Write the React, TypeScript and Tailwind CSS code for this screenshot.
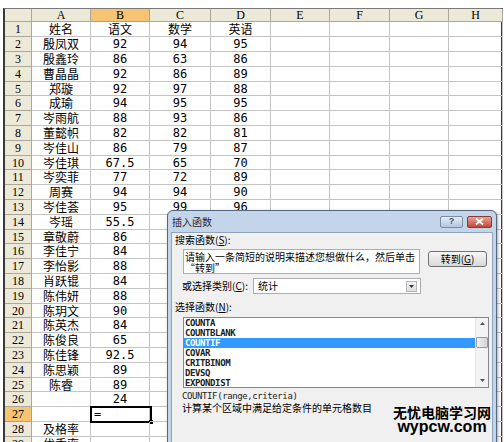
const rows: string[][] = [
  ['姓名', '语文', '数学', '英语'],
  ['殷凤双', '92', '94', '95'],
  ['殷鑫玲', '86', '63', '86'],
  ['曹晶晶', '92', '86', '89'],
  ['郑璇', '92', '97', '88'],
  ['成瑜', '94', '95', '95'],
  ['岑雨航', '88', '93', '86'],
  ['董懿帜', '82', '82', '81'],
  ['岑佳山', '86', '79', '87'],
  ['岑佳琪', '67.5', '65', '70'],
  ['岑奕菲', '77', '72', '89'],
  ['周赛', '94', '94', '90'],
  ['岑佳荟', '95', '99', '96'],
  ['岑瑶', '55.5', '', ''],
  ['章敬蔚', '86', '', ''],
  ['李佳宁', '84', '', ''],
  ['李怡影', '88', '', ''],
  ['肖跃锟', '84', '', ''],
  ['陈伟妍', '88', '', ''],
  ['陈玥文', '90', '', ''],
  ['陈英杰', '84', '', ''],
  ['陈俊良', '65', '', ''],
  ['陈佳锋', '92.5', '', ''],
  ['陈思颖', '89', '', ''],
  ['陈睿', '89', '', ''],
  ['', '24', '', ''],
  ['', '', '', ''],
  ['及格率', '', '', ''],
  ['优秀率', '', '', ''],
];

const cols = ['A', 'B', 'C', 'D', 'E', 'F', 'G', 'H'];
const gridCols = 'grid grid-cols-[27px_59px_59px_61px_60px_59px_60px_59px_54px]';
const cjk = "font-['Noto_Sans_CJK_SC',sans-serif]";
const mono = "font-['DejaVu_Sans_Mono','Noto_Sans_CJK_SC',monospace]";
const serif = "font-['Liberation_Serif',serif]";

const functions = ['COUNTA', 'COUNTBLANK', 'COUNTIF', 'COVAR', 'CRITBINOM', 'DEVSQ', 'EXPONDIST'];

function Sheet() {
  return (
    <div className="ml-[3px] mt-[8px] w-[500px] border-t border-l-2 border-r-2 border-t-[#7a7a7a] border-l-[#3a3a3a] border-r-[#3a3a3a]">
      {/* column headers */}
      <div className={`${gridCols} h-[13px]`}>
        <div className="border-r border-b border-[#aca899] bg-[#ece9d8]" />
        {cols.map((c) => (
          <div
            key={c}
            className={`flex items-center justify-center border-r border-b text-[12px] leading-none ${serif} ${
              c === 'B' ? 'border-[#d09a48] bg-[#f7c473]' : 'border-[#aca899] bg-[#ece9d8]'
            }`}
          >
            {c}
          </div>
        ))}
      </div>
      {rows.map((r, i) => (
        <div key={i} className={`${gridCols} ${i % 5 === 4 ? 'h-[14px]' : 'h-[15px]'}`}>
          <div
            className={`flex items-center justify-center border-r border-b text-[12px] leading-none ${serif} ${
              i === 26 ? 'border-[#d09a48] bg-[#f7c473]' : 'border-[#aca899] bg-[#ece9d8]'
            }`}
          >
            {i + 1}
          </div>
          <div className={`flex items-center justify-center border-r border-b border-[#c4c4c4] text-[12px] leading-none ${cjk}`}>
            {r[0]}
          </div>
          {[1, 2, 3].map((k) => (
            <div
              key={k}
              className={`relative flex items-center justify-center border-r border-b border-[#c4c4c4] text-[12px] leading-none ${
                i === 0 ? cjk : mono
              }`}
            >
              {r[k]}
              {i === 26 && k === 1 && (
                <div className="absolute -left-[1px] -top-[1px] h-[17px] w-[62px] border-2 border-black pl-[2px] text-left leading-[12px]">
                  =
                  <div className="absolute -bottom-[3px] -right-[3px] h-[4px] w-[4px] bg-black" />
                </div>
              )}
            </div>
          ))}
          {[0, 1, 2, 3].map((k) => (
            <div key={k} className="border-r border-b border-[#c4c4c4]" />
          ))}
        </div>
      ))}
    </div>
  );
}

function InsertFunctionDialog() {
  return (
    <div className="absolute left-[167px] top-[210px] h-[240px] w-[330px] rounded-t-[6px] border border-[#55687f] bg-[#c4d5ea] px-[3px] shadow-[1px_1px_3px_rgba(0,0,0,0.35)]">
      <div className="flex h-[21px] items-center justify-between pl-[1px] pr-[1px]">
        <span className={`text-[10px] leading-none text-[#1e2a3a] ${cjk}`}>插入函数</span>
        <div className="flex gap-[4px]">
          <div className="flex h-[12px] w-[23px] items-center justify-center rounded-[2px] border border-[#7a8ca6] bg-gradient-to-b from-[#e4ecf6] to-[#b3c6de] text-[9px] font-bold leading-none text-[#3b5478] font-['Liberation_Sans',sans-serif]">
            ?
          </div>
          <div className="flex h-[12px] w-[25px] items-center justify-center rounded-[2px] border border-[#8c3a33] bg-gradient-to-b from-[#e9a097] to-[#c3473b]">
            <svg width="9" height="7" viewBox="0 0 9 7">
              <path d="M1 0.5 L8 6.5 M8 0.5 L1 6.5" stroke="white" strokeWidth="1.8" />
            </svg>
          </div>
        </div>
      </div>
      <div className={`h-[215px] border border-[#90a4be] bg-[#f0f0f0] text-[10px] leading-[12px] text-black ${cjk}`}>
        <div className="pl-[3px] pt-[1px]">
          搜索函数(<u>S</u>):
        </div>
        <div className="ml-[11px] mt-[3px] flex items-start">
          <div className="h-[25px] w-[237px] border border-[#abadb3] bg-white px-[1px] pt-[1px] leading-[11px]">
            <div>请输入一条简短的说明来描述您想做什么，然后单击</div>
            <div>“转到”</div>
          </div>
          <div className="ml-[8px] mt-[2px] flex h-[16px] w-[59px] items-center justify-center rounded-[3px] border border-[#707070] bg-gradient-to-b from-[#f6f6f6] to-[#d9d9d9]">
            转到(<u>G</u>)
          </div>
        </div>
        <div className="ml-[10px] mt-[4px] flex items-center">
          <span className="w-[71px]">
            或选择类别(<u>C</u>):
          </span>
          <div className="flex h-[16px] w-[168px] items-center justify-between border border-[#abadb3] bg-white pl-[4px] pr-[3px]">
            <span>统计</span>
            <div className="flex h-[11px] w-[11px] items-center justify-center border border-[#b5b5b5] bg-gradient-to-b from-[#f4f4f4] to-[#dcdcdc]">
              <svg width="5" height="3" viewBox="0 0 5 3">
                <path d="M0 0 H5 L2.5 3 Z" fill="#333" />
              </svg>
            </div>
          </div>
        </div>
        <div className="mt-[7px] pl-[3px]">
          选择函数(<u>N</u>):
        </div>
        <div className="ml-[11px] mt-[4px] flex h-[71px] w-[306px] border border-[#828790] bg-white">
          <div className={`flex-1 text-[9px] font-bold leading-[10px] tracking-[-0.4px] ${mono}`}>
            {functions.map((f) => (
              <div key={f} className={`h-[10px] pl-[1px] ${f === 'COUNTIF' ? 'bg-[#3399ff] text-white' : 'text-[#222]'}`}>
                {f}
              </div>
            ))}
          </div>
          <div className="flex w-[13px] flex-col items-center border-l border-[#e6e6e6] bg-[#f3f3f3]">
            <svg className="mt-[4px]" width="5" height="3" viewBox="0 0 5 3">
              <path d="M0 3 H5 L2.5 0 Z" fill="#555" />
            </svg>
            <div className="mt-[12px] h-[11px] w-[12px] rounded-[1px] border border-[#9a9a9a] bg-gradient-to-r from-[#f2f2f2] to-[#d4d4d4]" />
            <div className="flex-1" />
            <svg className="mb-[5px]" width="5" height="3" viewBox="0 0 5 3">
              <path d="M0 0 H5 L2.5 3 Z" fill="#555" />
            </svg>
          </div>
        </div>
        <div className={`ml-[10px] mt-[3px] text-[9px] leading-[10px] tracking-[-0.4px] text-[#222] ${mono}`}>
          COUNTIF(range,criteria)
        </div>
        <div className="ml-[10px] mt-[1px]">计算某个区域中满足给定条件的单元格数目</div>
      </div>
    </div>
  );
}

export default function App() {
  return (
    <div className="relative h-[442px] w-[504px] overflow-hidden bg-white">
      <Sheet />
      <InsertFunctionDialog />
      <div className="absolute left-[393px] top-[405px] flex flex-col items-center">
        <div className={`text-[14px] font-bold leading-[15px] text-black ${cjk}`}>无忧电脑学习网</div>
        <div className="font-['Liberation_Sans',sans-serif] text-[16px] font-bold leading-[14px] text-black">wypcw.com</div>
      </div>
    </div>
  );
}
